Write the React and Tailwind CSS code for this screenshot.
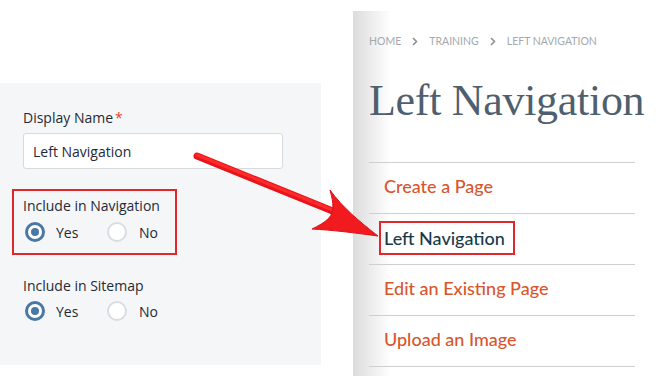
import React from "react";

const sans = { fontFamily: '"Open Sans", "Noto Sans", sans-serif' };
const lato = { fontFamily: 'Lato, "Open Sans", sans-serif' };

const Radio = ({ checked }) =>
  checked ? (
    <span className="flex h-[20px] w-[20px] items-center justify-center rounded-full border-[3px] border-[#4a78a4] bg-white">
      <span className="h-[8px] w-[8px] rounded-full bg-[#4a78a4]" />
    </span>
  ) : (
    <span className="h-[20px] w-[20px] rounded-full border-2 border-[#d8dde2] bg-white" />
  );

const RadioRow = () => (
  <div className="flex h-5 items-center pl-[2px] text-[14px] text-[#1f2a36]">
    <div className="flex w-[82px] items-center gap-[11px]">
      <Radio checked />
      <span>Yes</span>
    </div>
    <div className="flex items-center gap-[12px]">
      <Radio />
      <span>No</span>
    </div>
  </div>
);

const Chevron = () => (
  <svg className="mx-[11px]" width="6" height="9" viewBox="0 0 6 9">
    <path d="M1 1 L4.5 4.5 L1 8" fill="none" stroke="#8c9196" strokeWidth="1.6" />
  </svg>
);

const navItems = [
  { label: "Create a Page" },
  { label: "Left Navigation", active: true },
  { label: "Edit an Existing Page" },
  { label: "Upload an Image" },
];

const Arrow = () => (
  <svg
    className="pointer-events-none absolute left-0 top-0"
    width="665"
    height="376"
    viewBox="0 0 665 376"
  >
    <line x1="197" y1="156" x2="340" y2="214" stroke="#e8141b" strokeWidth="7" strokeLinecap="round" />
    <line x1="197" y1="155" x2="340" y2="213" stroke="#ff2a2a" strokeWidth="3" strokeLinecap="round" />
    <path
      d="M378 236 C 360 222, 342 207, 330 190 C 334 204, 334 212, 329 218 C 324 223, 318 226, 312 229 C 332 230, 356 233, 378 236 Z"
      fill="#f01a1f"
      stroke="#d9141a"
      strokeWidth="1"
    />
  </svg>
);

export default function App() {
  return (
    <div className="relative h-[376px] w-[665px] overflow-hidden bg-white" style={sans}>
      <div className="flex">
        {/* left form panel */}
        <div className="w-[321px] pt-[83px]">
          <div className="h-[282px] bg-[#f5f6f8] px-[23px] pt-[24px]">
            <div className="flex h-5 items-center text-[14px] text-[#1f2a36]">
              Display Name<span className="ml-[2px] text-[#e8412f]">*</span>
            </div>
            <div className="mt-[6px] flex h-[36px] w-[260px] items-center rounded-[3px] border border-[#d6dadf] bg-white px-[9px] text-[14px] text-[#1f2a36]">
              Left Navigation
            </div>

            <div className="-ml-[11px] mt-[20px] h-[66px] w-[165px] border-2 border-[#e0272d] pl-[9px] pt-[4px]">
              <div className="flex h-5 items-center text-[14px] text-[#1f2a36]">Include in Navigation</div>
              <div className="mt-[7px]">
                <RadioRow />
              </div>
            </div>

            <div className="mt-[20px] flex h-5 items-center text-[14px] text-[#1f2a36]">Include in Sitemap</div>
            <div className="mt-[6px]">
              <RadioRow />
            </div>
          </div>
        </div>

        {/* right page preview */}
        <div className="ml-[32px] mt-[11px] h-[365px] flex-1 bg-[linear-gradient(to_right,#dcdcdc,#ffffff_38px)] pl-[16px]" style={lato}>
          <div className="mt-[24px] flex h-[12px] items-center text-[10.5px] uppercase leading-none text-[#a3a8ad]">
            <span>Home</span>
            <Chevron />
            <span>Training</span>
            <Chevron />
            <span>Left Navigation</span>
          </div>
          <h1
            className="mt-[32px] whitespace-nowrap text-[44px] leading-[44px] tracking-[-0.3px] text-[#4f5f6e]"
            style={{ fontFamily: '"Liberation Serif", "DejaVu Serif", serif' }}
          >
            Left Navigation
          </h1>
          <ul className="mt-[39px] w-[266px] border-t border-[#cfcfcf]">
            {navItems.map((item) => (
              <li key={item.label} className="flex h-[51px] items-center border-b border-[#cfcfcf] pb-[3px]">
                {item.active ? (
                  <span className="ml-[10px] mt-[1px] flex h-[34px] items-center border-2 border-[#e0272d] pl-[3px] pr-[8px] text-[18px] font-medium text-[#173a48]">
                    {item.label}
                  </span>
                ) : (
                  <span className="pl-[15px] text-[18px] font-medium text-[#d9552c]">{item.label}</span>
                )}
              </li>
            ))}
          </ul>
        </div>
      </div>
      <Arrow />
    </div>
  );
}
